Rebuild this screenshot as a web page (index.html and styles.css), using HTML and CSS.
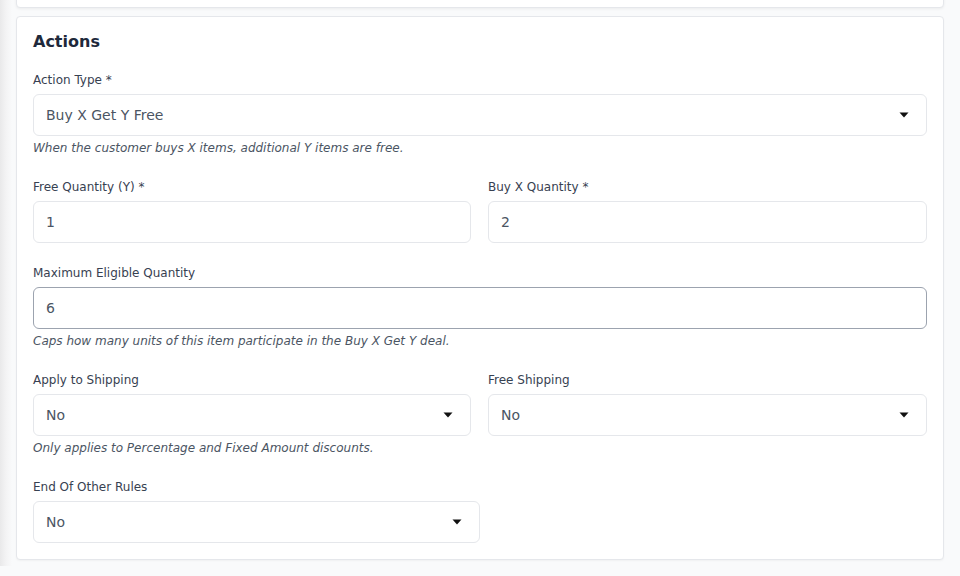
FILE: index.html
```html
<!DOCTYPE html>
<html lang="en">
<head>
<meta charset="utf-8">
<title>Actions</title>
<link rel="stylesheet" href="styles.css">
</head>
<body>
<div class="page">
  <div class="card card-prev"></div>
  <section class="card">
    <h2 class="card-title">Actions</h2>

    <div class="field">
      <label class="label">Action Type *</label>
      <div class="select-wrap">
        <select class="control">
          <option>Buy X Get Y Free</option>
        </select>
        <svg class="caret" width="10" height="6" viewBox="0 0 10 6"><path d="M0.5 0.5h9L5 5.5z" fill="#111"/></svg>
      </div>
      <p class="help">When the customer buys X items, additional Y items are free.</p>
    </div>

    <div class="row">
      <div class="field">
        <label class="label">Free Quantity (Y) *</label>
        <input class="control" type="text" value="1">
      </div>
      <div class="field">
        <label class="label">Buy X Quantity *</label>
        <input class="control" type="text" value="2">
      </div>
    </div>

    <div class="field">
      <label class="label">Maximum Eligible Quantity</label>
      <input class="control focused" type="text" value="6">
      <p class="help">Caps how many units of this item participate in the Buy X Get Y deal.</p>
    </div>

    <div class="row row-help">
      <div class="field">
        <label class="label">Apply to Shipping</label>
        <div class="select-wrap">
          <select class="control"><option>No</option></select>
          <svg class="caret" width="10" height="6" viewBox="0 0 10 6"><path d="M0.5 0.5h9L5 5.5z" fill="#111"/></svg>
        </div>
        <p class="help">Only applies to Percentage and Fixed Amount discounts.</p>
      </div>
      <div class="field">
        <label class="label">Free Shipping</label>
        <div class="select-wrap">
          <select class="control"><option>No</option></select>
          <svg class="caret" width="10" height="6" viewBox="0 0 10 6"><path d="M0.5 0.5h9L5 5.5z" fill="#111"/></svg>
        </div>
      </div>
    </div>

    <div class="half">
      <div class="field">
        <label class="label">End Of Other Rules</label>
        <div class="select-wrap">
          <select class="control"><option>No</option></select>
          <svg class="caret" width="10" height="6" viewBox="0 0 10 6"><path d="M0.5 0.5h9L5 5.5z" fill="#111"/></svg>
        </div>
      </div>
    </div>
  </section>
</div>
</body>
</html>
```
FILE: styles.css
```css
html, body {
  margin: 0;
  padding: 0;
}
body {
  background: #f9fafb;
  font-family: "DejaVu Sans", "Liberation Sans", sans-serif;
  color: #374151;
  height: 576px;
  overflow: hidden;
}
.page {
  width: 928px;
  padding: 0 16px;
  min-height: 576px;
  background: linear-gradient(to right, #e9e9ea 0px, #f3f3f4 6px, #f9fafb 12px);
  background-repeat: no-repeat;
  background-size: 14px 100%;
}
.card {
  background: #fff;
  border: 1px solid #e5e7eb;
  border-radius: 4px;
  padding: 16px;
  box-shadow: 0 1px 2px rgba(0,0,0,0.04);
}
.card-prev {
  padding: 0;
  margin-top: -10px;
  height: 16px;
  margin-bottom: 8px;
  box-shadow: 0 1px 3px rgba(0,0,0,0.06);
}
.card-title {
  margin: 0 0 22px;
  font-size: 16px;
  line-height: 17px;
  font-weight: 700;
  color: #1e293b;
}
.field {
  display: flex;
  flex-direction: column;
  margin-bottom: 23px;
}
.row {
  display: grid;
  grid-template-columns: 438fr 439fr;
  column-gap: 17px;
  margin-bottom: 22px;
}
.row-help {
  margin-bottom: 23px;
}
.row .field, .half .field { margin-bottom: 0; }
.half {
  width: 447px;
}
.label {
  font-size: 12px;
  line-height: 17px;
  color: #374151;
  margin-bottom: 5px;
}
.control {
  box-sizing: border-box;
  width: 100%;
  height: 42px;
  border: 1px solid #e5e7eb;
  border-radius: 6px;
  background: #fff;
  padding: 0 12px;
  font-family: inherit;
  font-size: 14px;
  color: #4b5563;
  outline: none;
  -webkit-appearance: none;
  appearance: none;
  margin: 0;
}
.control.focused {
  border-color: #9ca3af;
}
.select-wrap {
  position: relative;
}
.caret {
  position: absolute;
  right: 18px;
  top: 18px;
  pointer-events: none;
}
.help {
  margin: 4px 0 0;
  font-size: 12px;
  line-height: 16px;
  font-style: italic;
  color: #4b5563;
}
```
